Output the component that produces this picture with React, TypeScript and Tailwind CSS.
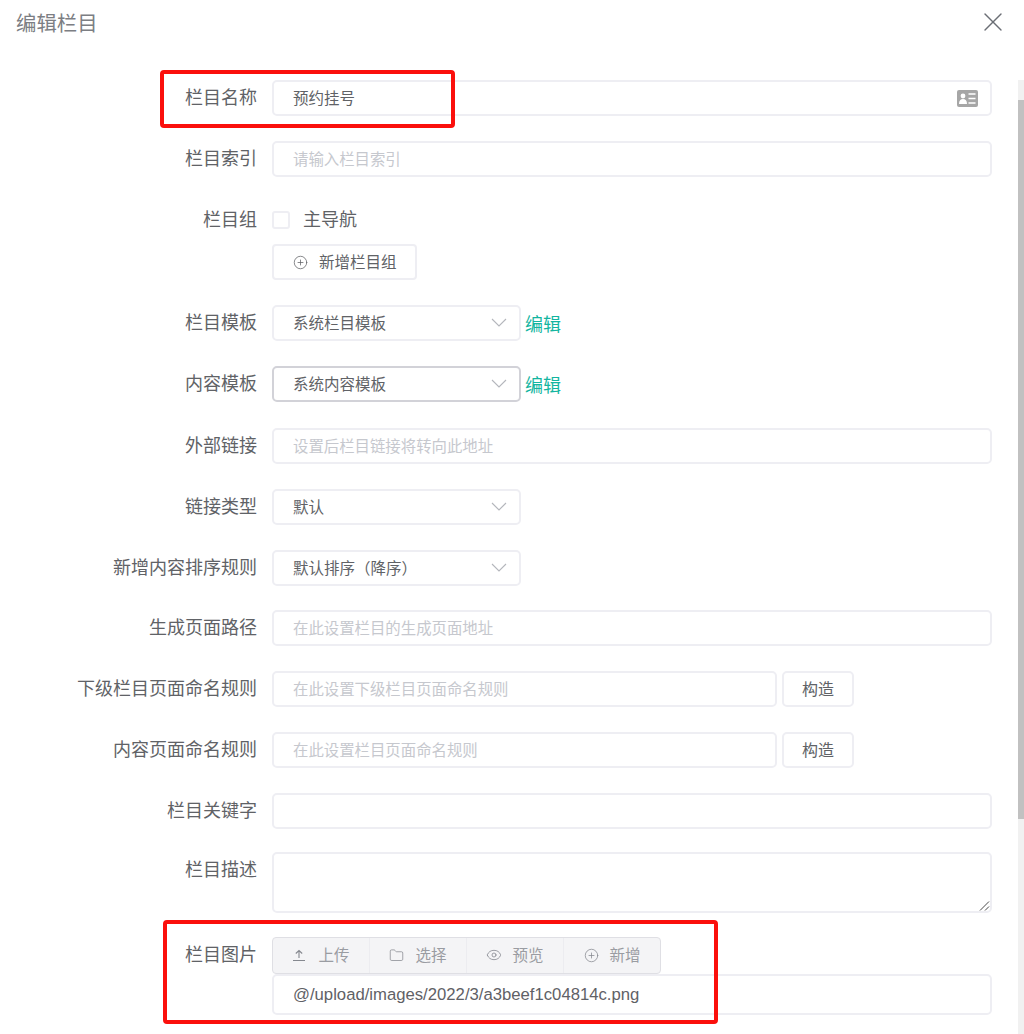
import React from 'react';
import { CirclePlus, Eye, Folder, X } from 'lucide-react';

const inputCls =
    'w-full h-9 rounded-[5px] border-2 border-[#eeeef3] bg-white pb-[3px] pl-[19px] pr-3 text-[15.5px] text-[#606266] outline-none placeholder:text-[15.4px] placeholder:text-[#c6c8ce]';

type RowProps = {
    label: string;
    className?: string;
    children: React.ReactNode;
};

const Row: React.FC<RowProps> = ({ label, className, children }) => (
    <div className={`flex ${className ?? ''}`}>
        <label className="w-[257px] shrink-0 text-right text-[18px] leading-[32px] text-[#606266]">{label}</label>
        <div className="ml-[15px] min-w-0 flex-1">{children}</div>
    </div>
);

const FakeSelect: React.FC<{ value: string; focused?: boolean }> = ({ value, focused }) => (
    <div
        className={`flex h-9 w-[249px] items-center justify-between rounded-[5px] border-2 bg-white pb-px pl-[19px] pr-[12px] text-[15.5px] text-[#606266] ${
            focused ? 'border-[#d2d2d8]' : 'border-[#eeeef3]'
        }`}
    >
        <span>{value}</span>
        <svg width="16" height="9" viewBox="0 0 16 9" fill="none" stroke="#b4b6bc" strokeWidth="1.100">
            <path d="M1 1l7 7 7-7" />
        </svg>
    </div>
);

const EditLink = () => <a className="ml-[4px] text-[18px] text-[#13b5a0]">编辑</a>;

const BuildButton = () => (
    <button
        type="button"
        className="ml-[5px] h-9 w-[72px] shrink-0 rounded-[5px] border-2 border-[#eeeef3] bg-white pb-[3px] text-[16px] text-[#606266]"
    >
        构造
    </button>
);

const UploadIcon = () => (
    <svg width="14" height="14" viewBox="0 0 14 14" fill="none" stroke="#85888f" strokeWidth="1.100">
        <path d="M7 10V2.500M3.800 5.500 7 2.500l3.200 3M1 12.500h12" />
    </svg>
);

const IdCardIcon = () => (
    <svg width="21" height="17" viewBox="0 0 21 17">
        <rect x="0" y="0" width="21" height="17" rx="2" fill="#a6a6a6" />
        <circle cx="6" cy="6" r="2.400" fill="#fff" />
        <path d="M2 14c0-3.500 1.500-5 4-5s4 1.500 4 5z" fill="#fff" />
        <path d="M11.500 4h7M11.500 8.500h7M11.500 13h7" stroke="#fff" strokeWidth="1.300" />
    </svg>
);

const tools = [
    { name: '上传', icon: <UploadIcon />, gap: 'gap-[12px]' },
    { name: '选择', icon: <Folder size={15} strokeWidth={1.2} className="text-[#85888f]" />, gap: 'gap-[11px]' },
    { name: '预览', icon: <Eye size={16} strokeWidth={1.2} className="text-[#85888f]" />, gap: 'gap-[10px]' },
    { name: '新增', icon: <CirclePlus size={15} strokeWidth={1.2} className="text-[#85888f]" />, gap: 'gap-[10px]' },
];

const App: React.FC = () => {
    return (
        <div
            className="relative h-[1034px] w-[1024px] overflow-hidden bg-white"
            style={{ fontFamily: '"Noto Sans CJK SC", "Liberation Sans", sans-serif' }}
        >
            <header className="flex h-[80px] items-start justify-between pl-[16px] pr-[15px] pt-[7px]">
                <h1 className="text-[20.400px] leading-[30px] text-[#7c7e83]">编辑栏目</h1>
                <X size={32} strokeWidth={1} className="-mt-[1px] text-[#6b6e75]" />
            </header>

            <form className="pr-[32px]">
                <Row label="栏目名称" className="mb-[25px]">
                    <div className="relative">
                        <input className={inputCls} defaultValue="预约挂号" />
                        <span className="absolute right-[14px] top-[10px]">
                            <IdCardIcon />
                        </span>
                    </div>
                </Row>
                <Row label="栏目索引" className="mb-[25px]">
                    <input className={inputCls} placeholder="请输入栏目索引" />
                </Row>
                <Row label="栏目组" className="mb-[25px]">
                    <div className="flex h-9 items-center">
                        <span className="h-[18px] w-[18px] rounded-[3px] border-2 border-[#eeeef3]" />
                        <span className="ml-[13px] pb-[3px] text-[18px] text-[#606266]">主导航</span>
                    </div>
                    <button
                        type="button"
                        className="mt-[6px] flex h-9 w-[145px] items-center rounded-[4px] border-2 border-[#eeeef3] bg-white pl-[19px] text-[15.5px] text-[#606266]"
                    >
                        <CirclePlus size={15} strokeWidth={1.2} />
                        <span className="ml-[11px]">新增栏目组</span>
                    </button>
                </Row>
                <Row label="栏目模板" className="mb-[25px]">
                    <div className="flex items-center">
                        <FakeSelect value="系统栏目模板" />
                        <EditLink />
                    </div>
                </Row>
                <Row label="内容模板" className="mb-[26px]">
                    <div className="flex items-center">
                        <FakeSelect value="系统内容模板" focused />
                        <EditLink />
                    </div>
                </Row>
                <Row label="外部链接" className="mb-[25px]">
                    <input className={inputCls} placeholder="设置后栏目链接将转向此地址" />
                </Row>
                <Row label="链接类型" className="mb-[25px]">
                    <FakeSelect value="默认" />
                </Row>
                <Row label="新增内容排序规则" className="mb-[24px]">
                    <FakeSelect value="默认排序（降序）" />
                </Row>
                <Row label="生成页面路径" className="mb-[25px]">
                    <input className={inputCls} placeholder="在此设置栏目的生成页面地址" />
                </Row>
                <Row label="下级栏目页面命名规则" className="mb-[25px]">
                    <div className="flex w-[582px]">
                        <input className={inputCls} placeholder="在此设置下级栏目页面命名规则" />
                        <BuildButton />
                    </div>
                </Row>
                <Row label="内容页面命名规则" className="mb-[25px]">
                    <div className="flex w-[582px]">
                        <input className={inputCls} placeholder="在此设置栏目页面命名规则" />
                        <BuildButton />
                    </div>
                </Row>
                <Row label="栏目关键字" className="mb-[23px]">
                    <input className={inputCls} />
                </Row>
                <Row label="栏目描述" className="mb-[24px]">
                    <div className="relative">
                        <textarea className="block h-[61px] w-full resize-none rounded-[5px] border-2 border-[#eeeef3] bg-white outline-none" />
                        <svg className="absolute bottom-[2px] right-[2px]" width="11" height="11" viewBox="0 0 11 11" stroke="#4a4a4a" fill="none">
                            <path d="M1 10.500 10 1.500M6 10.500 10 6.500" />
                        </svg>
                    </div>
                </Row>
                <Row label="栏目图片">
                    <div className="flex h-[37px] w-[389px] rounded-[4px] border border-[#dfdfe4] bg-[#f4f4f6]">
                        {tools.map((t) => (
                            <div
                                key={t.name}
                                className={`flex w-[97px] shrink-0 items-center justify-center border-r border-[#ececf0] pb-px text-[15.5px] text-[#9a9ca2] last:border-r-0 ${t.gap}`}
                            >
                                {t.icon}
                                <span>{t.name}</span>
                            </div>
                        ))}
                    </div>
                    <input
                        className="h-[41px] w-full rounded-[5px] border-2 border-[#eeeef3] bg-white pl-[19px] text-[16.7px] text-[#5f6166] outline-none"
                        style={{ fontFamily: '"Liberation Sans", sans-serif' }}
                        defaultValue="@/upload/images/2022/3/a3beef1c04814c.png"
                    />
                </Row>
            </form>

            {/* scrollbar */}
            <div className="absolute bottom-0 right-0 top-[80px] w-[6px] bg-[#f1f1f1]">
                <div className="mt-[20px] h-[719px] bg-[#c1c1c1]" />
            </div>

            {/* red callouts */}
            <div className="pointer-events-none absolute left-[160px] top-[70px] h-[57.500px] w-[295px] rounded-[4px] border-[4px] border-[#fb0f0c]" />
            <div className="pointer-events-none absolute left-[163px] top-[920px] h-[104px] w-[555px] rounded-[4px] border-[4px] border-[#fb0f0c]" />
        </div>
    );
};

export default App;
